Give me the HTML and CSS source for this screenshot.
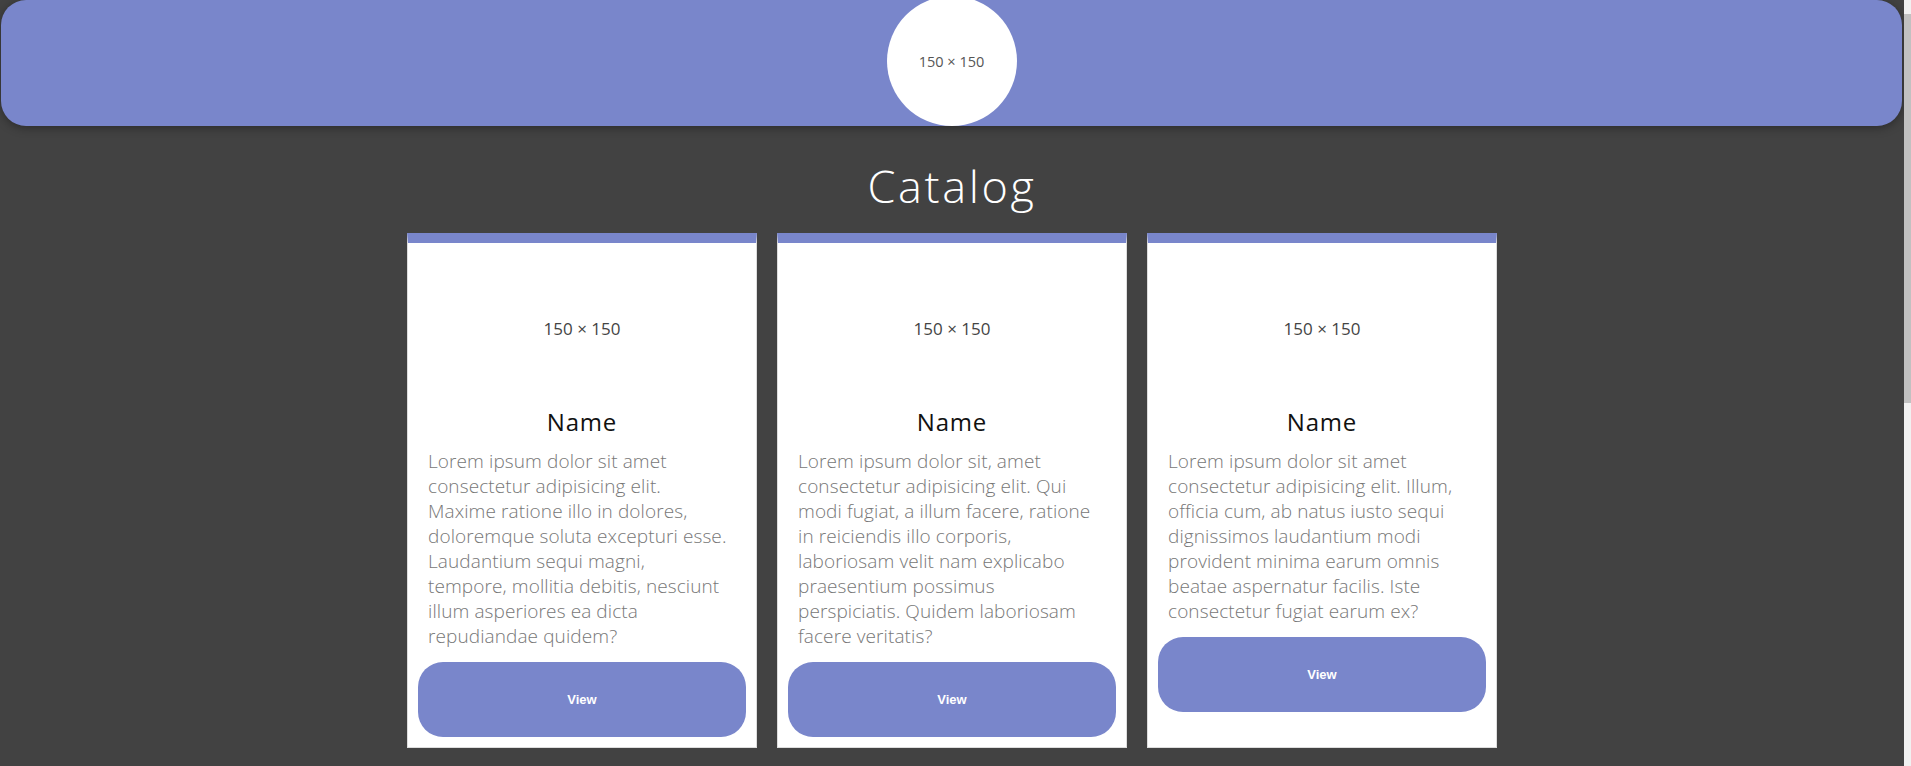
FILE: index.html
```html
<!DOCTYPE html>
<html lang="en">
<head>
  <meta charset="UTF-8" />
  <meta name="viewport" content="width=device-width, initial-scale=1" />
  <title>Catalog</title>
  <link rel="stylesheet" href="styles.css">
</head>
<body>

  <header class="top-bar">
    <div class="avatar">150 × 150</div>
  </header>

  <main>
    <h1 class="page-title">Catalog</h1>

    <section class="catalog">
      <article class="card">
        <div class="card-img">150 × 150</div>
        <h2 class="card-name">Name</h2>
        <p class="card-text">Lorem ipsum dolor sit amet consectetur adipisicing elit. Maxime ratione illo in dolores, doloremque soluta excepturi esse. Laudantium sequi magni, tempore, mollitia debitis, nesciunt illum asperiores ea dicta repudiandae quidem?</p>
        <button class="card-btn">View</button>
      </article>

      <article class="card">
        <div class="card-img">150 × 150</div>
        <h2 class="card-name">Name</h2>
        <p class="card-text">Lorem ipsum dolor sit, amet consectetur adipisicing elit. Qui modi fugiat, a illum facere, ratione in reiciendis illo corporis, laboriosam velit nam explicabo praesentium possimus perspiciatis. Quidem laboriosam facere veritatis?</p>
        <button class="card-btn">View</button>
      </article>

      <article class="card">
        <div class="card-img">150 × 150</div>
        <h2 class="card-name">Name</h2>
        <p class="card-text">Lorem ipsum dolor sit amet consectetur adipisicing elit. Illum, officia cum, ab natus iusto sequi dignissimos laudantium modi provident minima earum omnis beatae aspernatur facilis. Iste consectetur fugiat earum ex?</p>
        <button class="card-btn">View</button>
      </article>
    </section>
  </main>

</body>
</html>
```

FILE: styles.css
```css
* {
  box-sizing: border-box;
}

/* faixa clara à direita, com o "thumb" da barra de scroll */
html {
  margin: 0;
  padding: 0;
  background: linear-gradient(#c1c1c1, #c1c1c1) right 0 top 14px / 7px 389px no-repeat, #f1f1f1;
}

body {
  min-height: 100vh;
  margin: 0 7px 0 0;
  padding: 0;
  background: #424242;
  font-family: 'Open Sans', sans-serif;
}

.top-bar {
  height: 126px;
  margin: 0 2px 0 1px;
  display: flex;
  justify-content: center;
  align-items: flex-end;
  background: #7986cb;
  border-radius: 25px;
  box-shadow: 0 2px 10px rgba(0,0,0,0.35);
}

.avatar {
  width: 130px;
  height: 130px;
  flex-shrink: 0;
  border-radius: 50%;
  background: #fff;
  color: #555;
  font-size: 14.5px;
  display: flex;
  justify-content: center;
  align-items: center;
}

main {
  padding-bottom: 20px;
}

.page-title {
  margin: 33px 0 20px;
  text-align: center;
  color: #fff;
  font-size: 45px;
  font-weight: 300;
  line-height: 54px;
  letter-spacing: 2.6px;
}

.catalog {
  display: flex;
  justify-content: center;
  gap: 20px;
}

.card {
  width: 350px;
  padding: 10px;
  background: #fff;
  border: 1px solid #ddd;
  border-top: 10px solid #7986cb;
}

.card-img {
  width: 150px;
  height: 150px;
  margin: 0 auto;
  display: flex;
  justify-content: center;
  align-items: center;
  color: #444;
  font-size: 17px;
}

.card-name {
  margin: 5px 0 0;
  text-align: center;
  color: #111;
  font-size: 24px;
  font-weight: 400;
  line-height: 28.8px;
  letter-spacing: 0.8px;
}

.card-text {
  margin: 12px 0 13px;
  padding: 0 19px 0 10px;
  color: #777;
  font-size: 19px;
  font-weight: 300;
  line-height: 25px;
  letter-spacing: 0.1px;
}

.card-btn {
  display: block;
  width: 100%;
  height: 75px;
  border: none;
  border-radius: 25px;
  background: #7986cb;
  color: #fff;
  font-family: 'Liberation Sans', Arial, sans-serif;
  font-size: 13px;
  font-weight: 700;
  cursor: pointer;
}
```
